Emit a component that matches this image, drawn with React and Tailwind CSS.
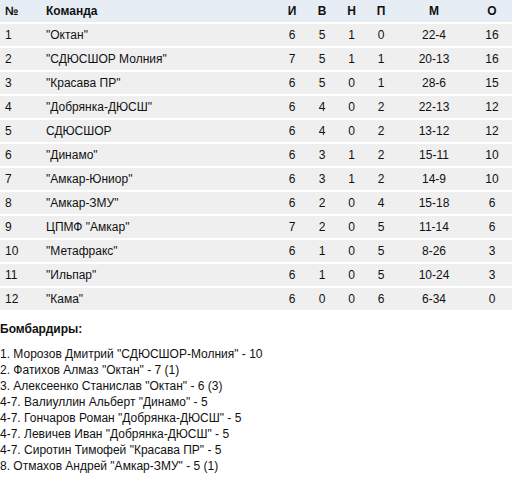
const rows = [
  ["1", "\"Октан\"", "6", "5", "1", "0", "22-4", "16"],
  ["2", "\"СДЮСШОР Молния\"", "7", "5", "1", "1", "20-13", "16"],
  ["3", "\"Красава ПР\"", "6", "5", "0", "1", "28-6", "15"],
  ["4", "\"Добрянка-ДЮСШ\"", "6", "4", "0", "2", "22-13", "12"],
  ["5", "СДЮСШОР", "6", "4", "0", "2", "13-12", "12"],
  ["6", "\"Динамо\"", "6", "3", "1", "2", "15-11", "10"],
  ["7", "\"Амкар-Юниор\"", "6", "3", "1", "2", "14-9", "10"],
  ["8", "\"Амкар-ЗМУ\"", "6", "2", "0", "4", "15-18", "6"],
  ["9", "ЦПМФ \"Амкар\"", "7", "2", "0", "5", "11-14", "6"],
  ["10", "\"Метафракс\"", "6", "1", "0", "5", "8-26", "3"],
  ["11", "\"Ильпар\"", "6", "1", "0", "5", "10-24", "3"],
  ["12", "\"Кама\"", "6", "0", "0", "6", "6-34", "0"],
];

const scorers = [
  "1. Морозов Дмитрий \"СДЮСШОР-Молния\" - 10",
  "2. Фатихов Алмаз \"Октан\" - 7 (1)",
  "3. Алексеенко Станислав \"Октан\" - 6 (3)",
  "4-7. Валиуллин Альберт \"Динамо\" - 5",
  "4-7. Гончаров Роман \"Добрянка-ДЮСШ\" - 5",
  "4-7. Левичев Иван \"Добрянка-ДЮСШ\" - 5",
  "4-7. Сиротин Тимофей \"Красава ПР\" - 5",
  "8. Отмахов Андрей \"Амкар-ЗМУ\" - 5 (1)",
];

function Row({ cells, header }) {
  return (
    <div
      className={
        "flex items-center h-[22px] " +
        (header ? "bg-[#e6edf4] font-bold" : "bg-[#efefef] mt-[2px]")
      }
    >
      <div className="w-[41px] pl-[5px]">{cells[0]}</div>
      <div className="w-[236px] pl-[5px]">{cells[1]}</div>
      <div className="w-[30px] text-center">{cells[2]}</div>
      <div className="w-[30px] text-center">{cells[3]}</div>
      <div className="w-[29px] text-center">{cells[4]}</div>
      <div className="w-[30px] text-center">{cells[5]}</div>
      <div className="w-[76px] text-center">{cells[6]}</div>
      <div className="w-[40px] text-center">{cells[7]}</div>
    </div>
  );
}

export default function App() {
  return (
    <div
      className="w-[512px] h-[479px] bg-white text-[12px] leading-[16px] text-[#111]"
      style={{ fontFamily: '"Liberation Sans", Arial, sans-serif' }}
    >
      <Row header cells={["№", "Команда", "И", "В", "Н", "П", "М", "О"]} />
      {rows.map((r) => (
        <Row key={r[0]} cells={r} />
      ))}
      <div className="mt-[11px] font-bold">Бомбардиры:</div>
      <div className="mt-[9px]">
        {scorers.map((s) => (
          <div key={s}>{s}</div>
        ))}
      </div>
    </div>
  );
}
